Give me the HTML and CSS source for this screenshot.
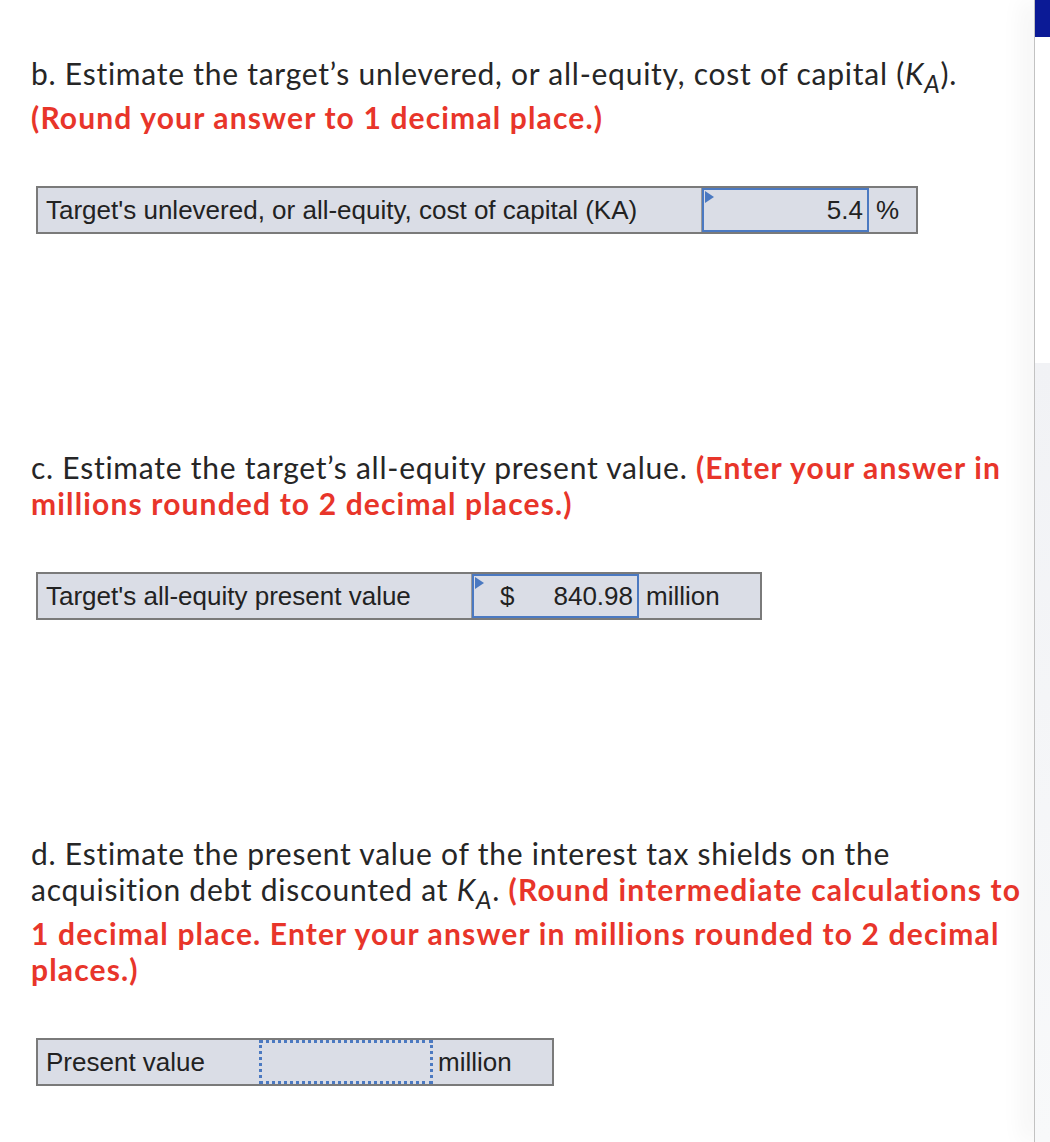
FILE: index.html
```
<!DOCTYPE html>
<html lang="en">
<head>
  <meta charset="UTF-8">
  <title>Acquisition valuation</title>
  <link rel="stylesheet" href="styles.css">
</head>
<body>

  <div class="page">
    <main class="content">

      <section class="part">
        <p class="prompt">b. Estimate the target’s unlevered, or all-equity, cost of capital (<i>K</i><sub>A</sub>).<br>
          <strong class="hint">(Round your answer to 1 decimal place.)</strong></p>
        <div class="answer-row">
          <div class="label label-b">Target's unlevered, or all-equity, cost of capital (KA)</div>
          <div class="field field-b"><span class="value">5.4</span></div>
          <div class="unit unit-pct">%</div>
        </div>
      </section>

      <section class="part">
        <p class="prompt">c. Estimate the target’s all-equity present value. <strong class="hint">(Enter your answer in</strong><br>
          <strong class="hint">millions rounded to 2 decimal places.)</strong></p>
        <div class="answer-row">
          <div class="label label-c">Target's all-equity present value</div>
          <div class="field field-c"><span class="currency">$</span><span class="value">840.98</span></div>
          <div class="unit unit-million">million</div>
        </div>
      </section>

      <section class="part">
        <p class="prompt">d. Estimate the present value of the interest tax shields on the<br>
          acquisition debt discounted at <i>K</i><sub>A</sub>. <strong class="hint">(Round intermediate calculations to</strong><br>
          <strong class="hint">1 decimal place. Enter your answer in millions rounded to 2 decimal</strong><br>
          <strong class="hint">places.)</strong></p>
        <div class="answer-row">
          <div class="label label-d">Present value</div>
          <div class="field field-d empty"></div>
          <div class="unit unit-million-d">million</div>
        </div>
      </section>

    </main>

    <aside class="scrollbar">
      <div class="thumb"></div>
      <div class="track"></div>
      <div class="track-end"></div>
    </aside>
  </div>

</body>
</html>
```

FILE: styles.css
```
* {
  box-sizing: border-box;
}

body {
  margin: 0;
  padding: 0;
  background: white;
  font-family: Lato, 'Noto Sans', sans-serif;
  color: #262626;
}

.page {
  display: flex;
  height: 1142px;
  overflow: hidden;
}

.content {
  flex: 1;
  min-width: 0;
  padding: 55px 0 0 31px;
}

.part {
  margin-bottom: 215px;
}

.prompt {
  margin: 0 0 51px;
  font-size: 30px;
  line-height: 36px;
  letter-spacing: 0.75px;
  white-space: nowrap;
}

.prompt i {
  font-style: italic;
}

.prompt sub {
  font-style: italic;
  font-size: 0.82em;
  line-height: 31px;
  vertical-align: -8px;
}

.hint {
  color: #e8352a;
  font-weight: bold;
  letter-spacing: 1.15px;
}

/* answer table */
.answer-row {
  display: flex;
  width: max-content;
  height: 48px;
  border: 2px solid #7a7a7a;
  background: #dadde6;
  font-family: 'Liberation Sans', Arial, sans-serif;
  font-size: 26px;
  color: #222;
  margin-left: 5px;
}

.label {
  display: flex;
  align-items: center;
  padding-left: 8px;
  border-right: 1px solid #9a9a9a;
}

.label-b { width: 664px; }
.label-c { width: 434px; }
.label-d { width: 221px; border-right: none; }

.field {
  position: relative;
  display: flex;
  align-items: center;
  justify-content: flex-end;
  padding-right: 4px;
  border: 2px solid #4b79c1;
}

/* little blue corner flag on the filled inputs */
.field::before {
  content: "";
  position: absolute;
  top: 1px;
  left: 1px;
  border-top: 6px solid transparent;
  border-bottom: 6px solid transparent;
  border-left: 9px solid #4b79c1;
}

.field-b { width: 167px; }

.field-c {
  width: 167px;
  justify-content: space-between;
  padding-left: 26px;
}

.field-d {
  width: 174px;
  border: 3px dotted #4b79c1;
}

.field.empty::before {
  display: none;
}

.unit {
  display: flex;
  align-items: center;
  padding-left: 7px;
}

.unit-pct { width: 47px; }
.unit-million { width: 121px; }
.unit-million-d { width: 119px; padding-left: 5px; }

/* right-hand scrollbar strip */
.scrollbar {
  width: 16px;
  flex-shrink: 0;
  display: flex;
  flex-direction: column;
  border-left: 1px solid #c2c2c2;
  box-shadow: -10px 0 24px rgba(0, 0, 0, 0.06);
}

.thumb {
  height: 37px;
  background: #0b1a96;
}

.track {
  height: 326px;
  background: white;
}

.track-end {
  flex: 1;
  background: linear-gradient(#f1f2f5, #f8f9fa);
}
```
